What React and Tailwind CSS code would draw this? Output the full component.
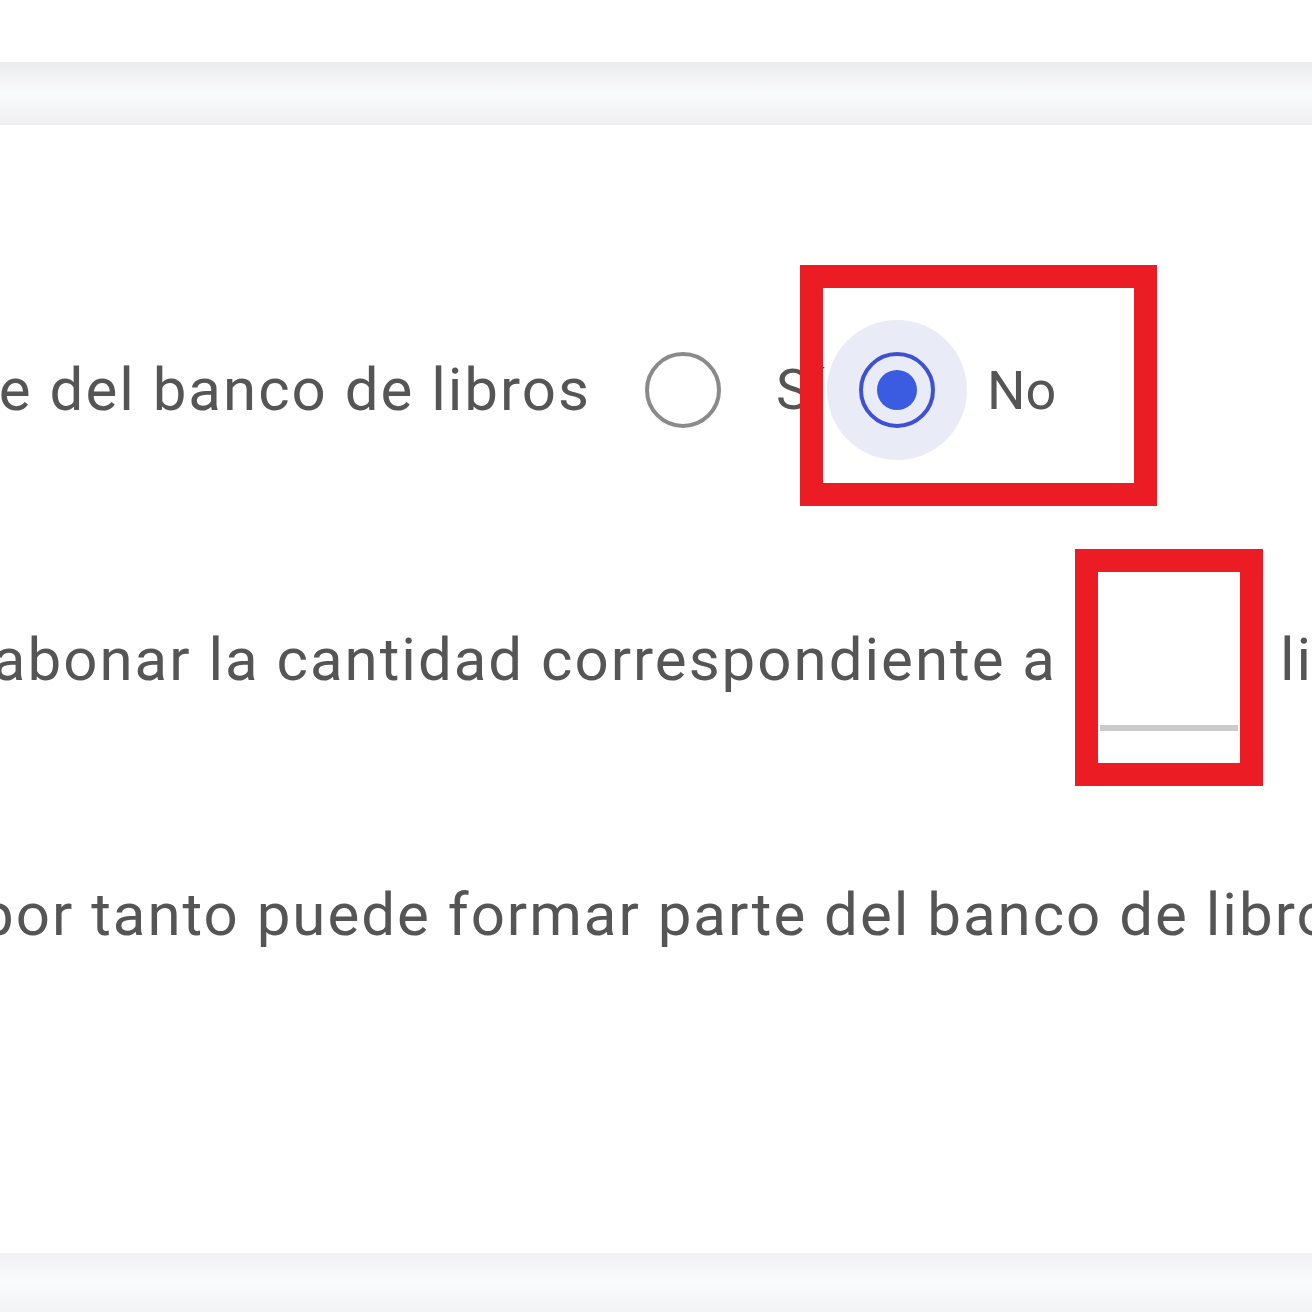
import React from 'react'

const Radio = ({ checked }) => {
  if (!checked) {
    return <div className='w-[76px] h-[76px] rounded-full border-[4px] border-[#8a8a8a] bg-white shrink-0' />
  }
  return (
    <div className='w-[140px] h-[140px] rounded-full bg-[#e9ebf7] flex items-center justify-center shrink-0'>
      <div className='w-[76px] h-[76px] rounded-full border-[4px] border-[#3f51d0] flex items-center justify-center'>
        <div className='w-[40px] h-[40px] rounded-full bg-[#3b5be0]' />
      </div>
    </div>
  )
}

const App = () => {
  return (
    <div className='relative w-[1312px] h-[1312px] overflow-hidden bg-white text-[#555]' style={{ fontFamily: 'Roboto, "Noto Sans", sans-serif' }}>
      <div className='h-[62px] bg-white' />
      <div className='h-[63px] bg-gradient-to-b from-[#ececef] via-[#fafbfd] to-[#efeff2]' />

      <div className='h-[1128px] bg-white flex flex-col pt-[195px]'>
        <div className='h-[140px] flex items-center whitespace-nowrap'>
          <div className='w-[591px] shrink-0 flex justify-end overflow-hidden text-[60px] tracking-[2px]'>
            <span>Su hijo/a forma parte del banco de libros</span>
          </div>
          <div className='ml-[54px]'><Radio /></div>
          <span className='ml-[55px] w-[51px] shrink-0 text-[56px]'>Sí</span>
          <Radio checked />
          <span className='ml-[20px] text-[54px]'>No</span>
        </div>

        <div className='h-[140px] mt-[130px] flex items-center whitespace-nowrap'>
          <div className='w-[1057px] shrink-0 flex justify-end overflow-hidden text-[60px] tracking-[2px]'>
            <span>Debe abonar la cantidad correspondiente a</span>
          </div>
          <div className='ml-[43px] w-[138px] h-[96px] shrink-0 border-b-[6px] border-[#cbcbcb] mt-[46px]' />
          <span className='ml-[42px] text-[60px] tracking-[2px]'>libros</span>
        </div>

        <div className='h-[140px] mt-[115px] flex items-center whitespace-nowrap text-[60px] tracking-[2px]'>
          <span className='-ml-[20px]'>por tanto puede formar parte del banco de libros</span>
        </div>
      </div>

      <div className='h-[59px] bg-gradient-to-b from-[#f1f1f3] via-[#fafbfd] to-[#f3f3f5]' />

      {/* annotation boxes */}
      <div className='absolute left-[800px] top-[265px] w-[357px] h-[241px] border-[23px] border-[#ec1c24]' />
      <div className='absolute left-[1075px] top-[549px] w-[188px] h-[237px] border-[23px] border-[#ec1c24]' />
    </div>
  )
}

export default App
